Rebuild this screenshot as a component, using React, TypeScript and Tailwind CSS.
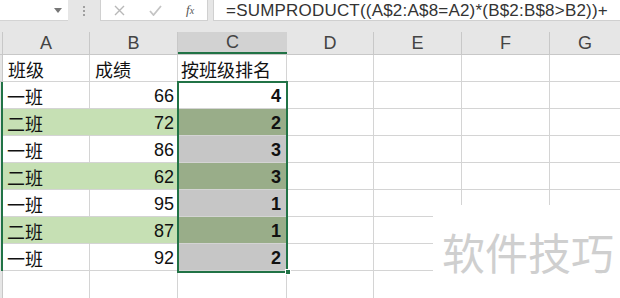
import React from "react";

const rows = [
  { a: "一班", b: "66", c: "4", g: false },
  { a: "二班", b: "72", c: "2", g: true },
  { a: "一班", b: "86", c: "3", g: false },
  { a: "二班", b: "62", c: "3", g: true },
  { a: "一班", b: "95", c: "1", g: false },
  { a: "二班", b: "87", c: "1", g: true },
  { a: "一班", b: "92", c: "2", g: false },
];

const cjk = { fontFamily: '"Noto Sans CJK SC", "Noto Sans", sans-serif' };
const lat = { fontFamily: '"Liberation Sans", Arial, sans-serif' };

export default function App() {
  return (
    <div className="relative w-[620px] h-[298px] overflow-hidden bg-white text-black">
      {/* formula bar */}
      <div className="flex h-[21px] bg-[#e6e6e6]">
        <div className="w-[68px] bg-white relative flex items-center justify-end pr-[6px] border-b border-[#d4d4d4]">
          <svg width="8" height="5" viewBox="0 0 8 5"><path d="M0 0 L8 0 L4 5 Z" fill="#777" /></svg>
        </div>
        <div className="w-[32px] flex items-center justify-center">
          <div className="flex flex-col gap-[2px]">
            <div className="w-[2px] h-[2px] bg-[#a0a0a0]" />
            <div className="w-[2px] h-[2px] bg-[#a0a0a0]" />
            <div className="w-[2px] h-[2px] bg-[#a0a0a0]" />
          </div>
        </div>
        <div className="w-[108px] bg-white border border-t-0 border-[#d0d0d0] flex items-center">
          <svg className="ml-[13px]" width="11" height="11" viewBox="0 0 11 11"><path d="M1 1 L10 10 M10 1 L1 10" stroke="#b8b8b8" strokeWidth="1.4" /></svg>
          <svg className="ml-[24px]" width="13" height="11" viewBox="0 0 13 11"><path d="M1 6 L4.5 10 L12 1" stroke="#c4c4c4" strokeWidth="1.8" fill="none" /></svg>
          <span className="ml-[24px] text-[13px] italic text-[#555]" style={{ fontFamily: '"Liberation Serif", serif' }}>f<span className="text-[10px]">x</span></span>
        </div>
        <div className="w-[5px]" />
        <div className="flex-1 bg-white border border-t-0 border-r-0 border-[#d0d0d0] flex items-center pl-[12px] overflow-hidden whitespace-nowrap">
          <span className="text-[17px] leading-none text-[#333] tracking-[0.2px]" style={lat}>=SUMPRODUCT((A$2:A$8=A2)*(B$2:B$8&gt;B2))+</span>
        </div>
      </div>
      <div className="h-[11px] bg-[#e6e6e6]" />
      {/* column header */}
      <div className="flex h-[23px] bg-[#e6e6e6] text-[18px] text-[#444] border-b border-[#c8c8c8]" style={lat}>
        <div className="w-[3px] border-r border-[#c8c8c8]" />
        <div className="w-[87px] border-r border-[#c8c8c8] flex items-center justify-center">A</div>
        <div className="w-[88px] border-r border-[#c8c8c8] flex items-center justify-center">B</div>
        <div className="w-[109px] bg-[#d2d2d2] border-b-2 border-[#217346] flex items-center justify-center">C</div>
        <div className="w-[87px] border-r border-[#c8c8c8] flex items-center justify-center">D</div>
        <div className="w-[88px] border-r border-[#c8c8c8] flex items-center justify-center">E</div>
        <div className="w-[88px] border-r border-[#c8c8c8] flex items-center justify-center">F</div>
        <div className="flex-1 flex items-center justify-center">G</div>
      </div>
      {/* header row */}
      <div className="flex h-[27px] text-[18px] text-[#111]" style={cjk}>
        <div className="w-[3px] bg-[#e6e6e6] border-r border-[#c8c8c8] border-b" />
        <div className="w-[87px] border-r border-b border-[#d4d4d4] pl-[5px] pt-[2px] flex items-center">班级</div>
        <div className="w-[88px] border-r border-b border-[#d4d4d4] pl-[5px] pt-[2px] flex items-center">成绩</div>
        <div className="w-[109px] border-r border-b border-[#d4d4d4] pl-[3px] pt-[2px] flex items-center">按班级排名</div>
        <div className="w-[87px] border-r border-b border-[#d4d4d4]" />
        <div className="w-[88px] border-r border-b border-[#d4d4d4]" />
        <div className="w-[88px] border-r border-b border-[#d4d4d4]" />
        <div className="flex-1 border-b border-[#d4d4d4]" />
      </div>
      {rows.map((r, i) => (
        <div key={i} className="flex h-[27px] text-[18px] text-[#111]">
          <div className="w-[3px] bg-[#e6e6e6] border-r-2 border-[#217346]" />
          <div className={`w-[87px] border-r border-b border-[#d4d4d4] pl-[4px] pt-[2px] flex items-center ${r.g ? "bg-[#c6e0b4] border-r-[#c6e0b4]" : ""}`} style={cjk}>{r.a}</div>
          <div className={`w-[88px] border-r border-b border-[#d4d4d4] pr-[3px] pt-[2px] flex items-center justify-end ${r.g ? "bg-[#c6e0b4]" : ""}`} style={lat}>{r.b}</div>
          <div className={`w-[109px] border-r border-b border-[#d4d4d4] pr-[5px] pt-[2px] flex items-center justify-end font-bold ${i === 0 ? "bg-white" : r.g ? "bg-[#99ad89]" : "bg-[#c6c6c6]"}`} style={lat}>{r.c}</div>
          <div className="w-[87px] border-r border-b border-[#d4d4d4]" />
          <div className="w-[88px] border-r border-b border-[#d4d4d4]" />
          <div className="w-[88px] border-r border-b border-[#d4d4d4]" />
          <div className="flex-1 border-b border-[#d4d4d4]" />
        </div>
      ))}
      <div className="flex h-[27px]">
        <div className="w-[3px] bg-[#e6e6e6] border-r border-[#c8c8c8]" />
        <div className="w-[87px] border-r border-[#d4d4d4]" />
        <div className="w-[88px] border-r border-[#d4d4d4]" />
        <div className="w-[109px] border-r border-[#d4d4d4]" />
        <div className="w-[87px] border-r border-[#d4d4d4]" />
        <div className="w-[88px] border-r border-[#d4d4d4]" />
        <div className="w-[88px] border-r border-[#d4d4d4]" />
        <div className="flex-1" />
      </div>
      {/* selection border */}
      <div className="absolute left-[177px] top-[81px] w-[111px] h-[192px] border-2 border-[#217346] pointer-events-none" />
      <div className="absolute left-[285px] top-[269px] w-[6px] h-[6px] bg-[#217346] border border-white" />
      {/* watermark */}
      <div className="absolute left-[433px] top-[205px] w-[187px] h-[93px] bg-white flex items-center pl-[9px]">
        <span className="text-[43px] leading-none text-[#cfcfcf]" style={cjk}>软件技巧</span>
      </div>
    </div>
  );
}
